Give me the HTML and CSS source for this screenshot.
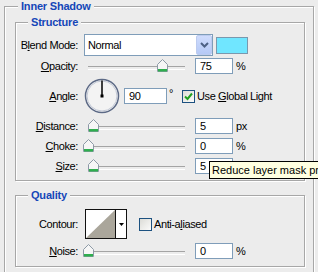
FILE: index.html
```html
<!DOCTYPE html>
<html lang="en">
<head>
    <meta charset="UTF-8">
    <title>Inner Shadow</title>
    <link rel="stylesheet" href="styles.css">
</head>
<body>
    <fieldset class="panel">
        <legend class="panel-title">Inner Shadow</legend>

        <fieldset class="group">
            <legend class="group-title">Structure</legend>

            <div class="row row-blend">
                <span class="lbl">B<u>l</u>end Mode:</span>
                <div class="select">
                    <span class="select-value">Normal</span>
                    <span class="select-btn">
                        <svg width="9" height="6" viewBox="0 0 9 6"><path d="M1 1 L4.5 4.5 L8 1" fill="none" stroke="#4d6185" stroke-width="2"/></svg>
                    </span>
                </div>
                <span class="swatch"></span>
            </div>

            <div class="row row-slider">
                <span class="lbl"><u>O</u>pacity:</span>
                <div class="slider">
                    <svg class="thumb" style="left:73px" width="11" height="13" viewBox="0 0 11 13"><path d="M5.5 0.5 L10.5 5.5 V12.5 H0.5 V5.5 Z" fill="#f6f6f6" stroke="#8d9aa6"/><rect x="1" y="10" width="9" height="2.5" fill="#2fae4e"/></svg>
                </div>
                <span class="field">75</span>
                <span class="unit">%</span>
            </div>

            <div class="row row-angle">
                <span class="lbl"><u>A</u>ngle:</span>
                <svg class="dial" width="36" height="36" viewBox="0 0 36 36">
                    <circle cx="18" cy="18" r="16.5" fill="#f3f3f3" stroke="#5d6a86" stroke-width="1.5"/>
                    <circle cx="18" cy="18" r="15" fill="none" stroke="#c3c9d6" stroke-width="1"/>
                    <line x1="18" y1="2.5" x2="18" y2="18" stroke="#000" stroke-width="1.5"/>
                    <rect x="16.5" y="16.5" width="3" height="3" fill="#000"/>
                </svg>
                <span class="field field-angle">90</span>
                <span class="degree">°</span>
                <span class="check checked">
                    <svg width="11" height="11" viewBox="0 0 11 11"><path d="M2 5.5 L4.5 8 L9 2.5" fill="none" stroke="#21a121" stroke-width="2"/></svg>
                </span>
                <span class="check-text">Use <u>G</u>lobal Light</span>
            </div>

            <div class="row row-slider">
                <span class="lbl"><u>D</u>istance:</span>
                <div class="slider">
                    <svg class="thumb" style="left:4px" width="11" height="13" viewBox="0 0 11 13"><path d="M5.5 0.5 L10.5 5.5 V12.5 H0.5 V5.5 Z" fill="#f6f6f6" stroke="#8d9aa6"/><rect x="1" y="10" width="9" height="2.5" fill="#2fae4e"/></svg>
                </div>
                <span class="field">5</span>
                <span class="unit">px</span>
            </div>

            <div class="row row-slider">
                <span class="lbl"><u>C</u>hoke:</span>
                <div class="slider">
                    <svg class="thumb" style="left:-1px" width="11" height="13" viewBox="0 0 11 13"><path d="M5.5 0.5 L10.5 5.5 V12.5 H0.5 V5.5 Z" fill="#f6f6f6" stroke="#8d9aa6"/><rect x="1" y="10" width="9" height="2.5" fill="#2fae4e"/></svg>
                </div>
                <span class="field">0</span>
                <span class="unit">%</span>
            </div>

            <div class="row row-slider">
                <span class="lbl"><u>S</u>ize:</span>
                <div class="slider">
                    <svg class="thumb" style="left:4px" width="11" height="13" viewBox="0 0 11 13"><path d="M5.5 0.5 L10.5 5.5 V12.5 H0.5 V5.5 Z" fill="#f6f6f6" stroke="#8d9aa6"/><rect x="1" y="10" width="9" height="2.5" fill="#2fae4e"/></svg>
                </div>
                <span class="field">5</span>
                <span class="unit">px</span>
            </div>
        </fieldset>

        <fieldset class="group group-quality">
            <legend class="group-title">Quality</legend>

            <div class="row row-contour">
                <span class="lbl">Contour:</span>
                <div class="contour">
                    <svg class="contour-curve" width="29" height="28" viewBox="0 0 29 28"><polygon points="0,28 29,0 29,28" fill="#aaa69b"/></svg>
                    <span class="contour-btn">
                        <svg width="5" height="3" viewBox="0 0 5 3"><polygon points="0,0 5,0 2.5,3" fill="#000"/></svg>
                    </span>
                </div>
                <span class="check check-aa"></span>
                <span class="check-text">Anti-a<u>l</u>iased</span>
            </div>

            <div class="row row-slider row-noise">
                <span class="lbl"><u>N</u>oise:</span>
                <div class="slider">
                    <svg class="thumb" style="left:-1px" width="11" height="13" viewBox="0 0 11 13"><path d="M5.5 0.5 L10.5 5.5 V12.5 H0.5 V5.5 Z" fill="#f6f6f6" stroke="#8d9aa6"/><rect x="1" y="10" width="9" height="2.5" fill="#2fae4e"/></svg>
                </div>
                <span class="field">0</span>
                <span class="unit">%</span>
            </div>
        </fieldset>
    </fieldset>

    <div class="tooltip">Reduce layer mask pri</div>
</body>
</html>
```

FILE: styles.css
```css
* {
    box-sizing: border-box;
}
body {
    margin: 0;
    width: 318px;
    height: 272px;
    overflow: hidden;
    position: relative;
    background: #ececec;
    font-family: "Liberation Sans", Arial, sans-serif;
    font-size: 11px;
    letter-spacing: -0.4px;
    color: #000;
}
fieldset {
    margin: 0;
    padding: 0;
    min-width: 0;
    border: 1px solid #a7a7a7;
    box-shadow: inset 1px 1px 0 #fff, 1px 1px 0 #fff;
}
legend {
    padding: 0 3px;
    font-weight: bold;
    letter-spacing: -0.2px;
    color: #1446b8;
    line-height: 13px;
    background: #ececec;
}
.panel {
    margin: 0 4px;
    padding: 0 8px 10px 10px;
}
.panel-title {
    margin-left: 3px;
}
.group {
    margin-top: 3px;
    padding: 5px 0 4px;
}
.group-title {
    margin-left: 12px;
}
.group-quality {
    margin-top: 8px;
    padding: 7px 0 6px;
}
.row {
    display: flex;
    align-items: center;
    height: 20px;
}
.lbl {
    flex: none;
    width: 62px;
    margin-right: 6px;
    text-align: right;
    white-space: nowrap;
}
.row-blend {
    height: 22px;
}
.select {
    display: flex;
    width: 129px;
    height: 22px;
    border: 1px solid #7f9db9;
    background: #fff;
}
.select-value {
    flex: 1;
    padding-left: 3px;
    line-height: 20px;
}
.select-btn {
    display: flex;
    align-items: center;
    justify-content: center;
    width: 16px;
    border: 1px solid #bccbef;
    border-radius: 2px;
    background: linear-gradient(#cfdcfd, #b5c9f6);
}
.swatch {
    width: 32px;
    height: 17px;
    margin-left: 3px;
    border: 1px solid #7a98ae;
    background: #70e6ff;
}
.slider {
    position: relative;
    flex: none;
    width: 104px;
    height: 20px;
    margin-right: 7px;
}
.slider::before {
    content: "";
    position: absolute;
    left: 4px;
    right: 3px;
    top: 10px;
    height: 2px;
    border-top: 1px solid #a4a4a4;
    border-bottom: 1px solid #fff;
}
.thumb {
    position: absolute;
    top: 3px;
}
.field {
    flex: none;
    width: 38px;
    height: 16px;
    padding-left: 4px;
    border: 1px solid #7f9db9;
    background: #fff;
    line-height: 14px;
}
.unit {
    margin-left: 3px;
}
.row-angle {
    height: 40px;
}
.dial {
    flex: none;
    margin-right: 4px;
}
.field-angle {
    width: 43px;
}
.degree {
    margin-left: 2px;
    align-self: flex-start;
    margin-top: 11px;
}
.check {
    display: flex;
    align-items: center;
    justify-content: center;
    flex: none;
    width: 13px;
    height: 13px;
    margin-left: 9px;
    border: 1px solid #1c5180;
    background: linear-gradient(135deg, #dcdcd7, #fbfbfa);
}
.check-text {
    margin-left: 2px;
    white-space: nowrap;
}
.row-contour {
    height: 30px;
}
.contour {
    display: flex;
    width: 42px;
    height: 30px;
    margin-left: 1px;
    border: 1px solid #111;
    background: #fff;
}
.contour-btn {
    display: flex;
    align-items: center;
    justify-content: center;
    width: 11px;
    border-left: 1px solid #111;
}
.check-aa {
    margin-left: 12px;
}
.row-noise {
    height: 18px;
    margin-top: 3px;
}
.tooltip {
    position: absolute;
    left: 209px;
    top: 161px;
    width: 109px;
    height: 18px;
    padding-left: 2px;
    border: 1px solid #000;
    border-right: 0;
    background: #ffffe1;
    font-size: 11px;
    letter-spacing: 0;
    line-height: 16px;
    white-space: nowrap;
    overflow: hidden;
}
```
